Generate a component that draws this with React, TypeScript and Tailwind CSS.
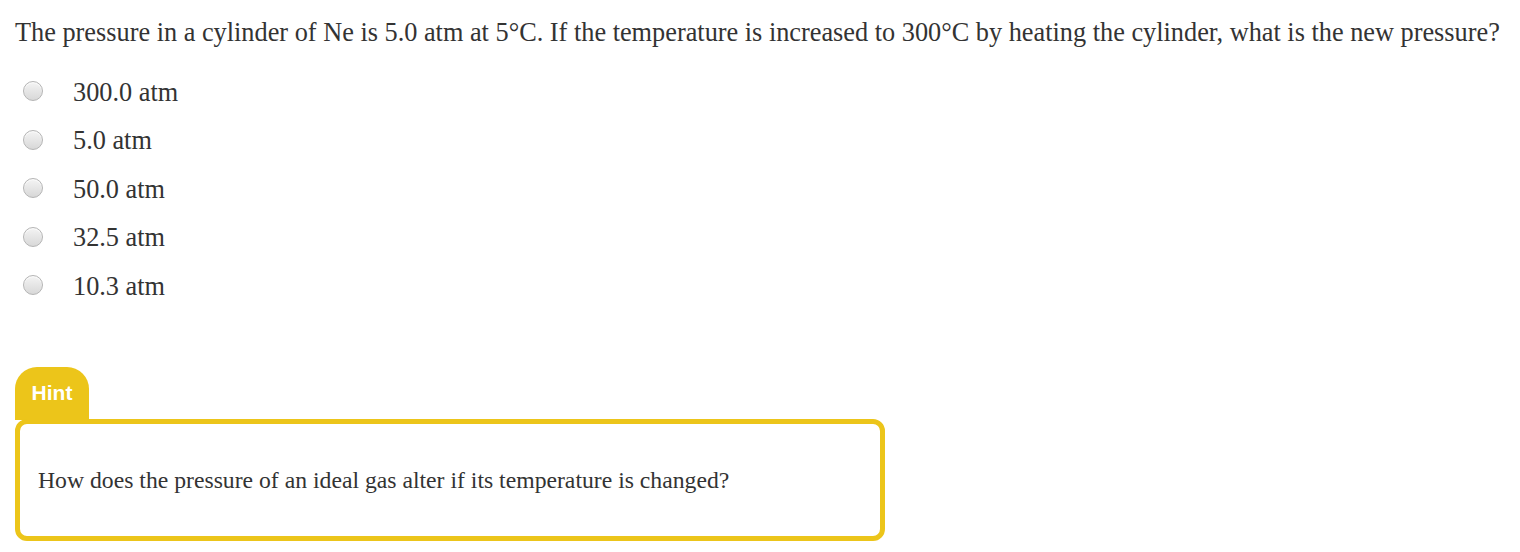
const options = ["300.0 atm", "5.0 atm", "50.0 atm", "32.5 atm", "10.3 atm"];

function Radio() {
  return (
    <span className="block w-[20px] h-[20px] rounded-full border border-[#b5b5b5] bg-gradient-to-b from-[#f4f4f4] to-[#d8d8d8] shadow-[inset_0_1px_1px_rgba(255,255,255,0.8)]" />
  );
}

export default function App() {
  return (
    <div className="w-[1520px] h-[552px] bg-white text-[#333] font-['Liberation_Serif',serif] overflow-hidden">
      <p className="pl-[15px] pt-[19px] text-[26.3px] leading-[28px] whitespace-nowrap">
        The pressure in a cylinder of Ne is 5.0 atm at 5°C. If the temperature is increased to 300°C by heating the
        cylinder, what is the new pressure?
      </p>

      <ul className="mt-[31.5px] flex flex-col gap-[20.6px]">
        {options.map((o) => (
          <li key={o} className="flex items-center h-[28px]">
            <span className="ml-[23px] mr-[30px] -mt-[3px]">
              <Radio />
            </span>
            <span className="text-[26.3px] leading-[28px]">{o}</span>
          </li>
        ))}
      </ul>

      <div className="ml-[15px] mt-[66px] w-[870px]">
        <div className="w-[74px] h-[53px] rounded-t-[22px] bg-[#ecc51a] flex items-start justify-center pt-[14px]">
          <span className="text-white font-bold text-[21px] leading-[24px] font-['Liberation_Sans',Arial,sans-serif]">
            Hint
          </span>
        </div>
        <div className="-mt-px h-[122px] border-[5px] border-[#ecc51a] rounded-[12px] flex items-center pl-[18px]">
          <p className="text-[23.7px] leading-[26px]">
            How does the pressure of an ideal gas alter if its temperature is changed?
          </p>
        </div>
      </div>
    </div>
  );
}
